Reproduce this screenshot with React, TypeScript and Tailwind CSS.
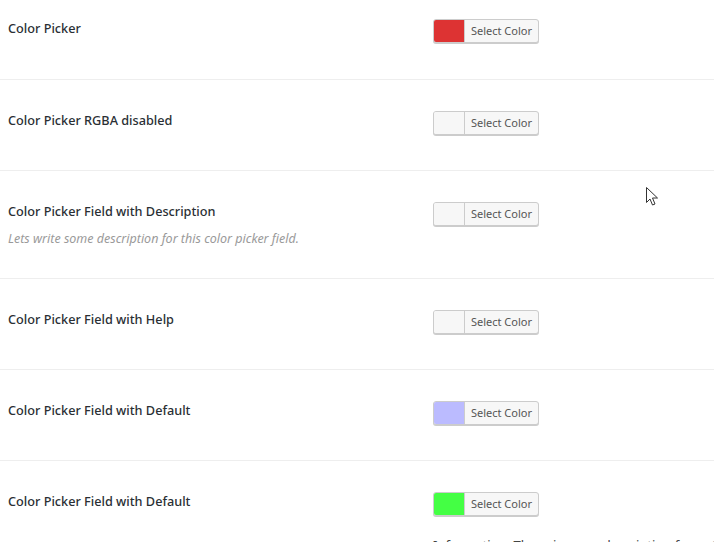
type Row = {
  label: string;
  color: string | null;
  desc?: string;
  first?: boolean;
};

const rows: Row[] = [
  { label: "Color Picker", color: "#dd3333", first: true },
  { label: "Color Picker RGBA disabled", color: null },
  {
    label: "Color Picker Field with Description",
    color: null,
    desc: "Lets write some description for this color picker field.",
  },
  { label: "Color Picker Field with Help", color: null },
  { label: "Color Picker Field with Default", color: "#bbbbff" },
  { label: "Color Picker Field with Default", color: "#44ff44" },
];

function ColorButton({ color }: { color: string | null }) {
  return (
    <button className="flex h-[24px] w-[106px] items-stretch overflow-hidden rounded-[3px] border border-[#cccccc] bg-[#f7f7f7] p-0 shadow-[0_1px_0_#cccccc]">
      <span
        className="block w-[31px] border-r border-[#cccccc]"
        style={{ backgroundColor: color ?? "#f7f7f7" }}
      />
      <span className="flex flex-1 items-center justify-center text-[11px] text-[#555555]">
        Select Color
      </span>
    </button>
  );
}

export default function App() {
  return (
    <div className="relative h-[542px] w-[714px] overflow-hidden bg-white font-['Noto_Sans','Open_Sans',sans-serif] text-[#23282d]">
      {rows.map((r, i) => (
        <div
          key={i}
          className={
            "flex border-b border-[#eeeeee] " +
            (r.first ? "pt-[19px] pb-[36px]" : r.desc ? "pt-[31px] pb-[30px]" : "pt-[31px] pb-[35px]")
          }
        >
          <div className="w-[433px] shrink-0 pl-[8px]">
            <div className="text-[12.7px] font-medium leading-[18px] text-[#2a2f34]">{r.label}</div>
            {r.desc && (
              <div className="mt-[10px] text-[12.5px] italic leading-[18px] text-[#9a9a9a]">
                {r.desc}
              </div>
            )}
          </div>
          <div className="shrink-0">
            <ColorButton color={r.color} />
            {i === rows.length - 1 && (
              <div className="mt-[20px] whitespace-nowrap text-[13px] leading-[18px] text-[#444444]">
                Information. These is some description for optional field.
              </div>
            )}
          </div>
        </div>
      ))}
      {/* mouse cursor */}
      <svg
        className="absolute left-[646px] top-[187px]"
        width="13"
        height="20"
        viewBox="0 0 13 20"
      >
        <path
          d="M0.5 0.5 L0.5 15.5 L4 12 L6.5 18 L9 17 L6.5 11 L11.5 11 Z"
          fill="white"
          stroke="#333"
          strokeWidth="1"
        />
      </svg>
    </div>
  );
}
